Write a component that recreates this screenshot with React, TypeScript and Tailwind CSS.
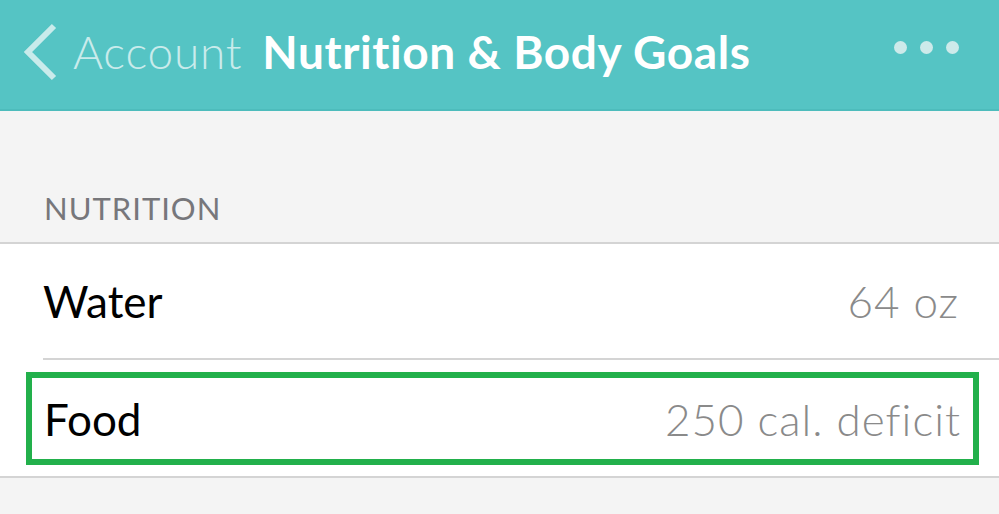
export default function App() {
  return (
    <div className="w-[999px] h-[514px] overflow-hidden bg-[#f4f4f4] [font-variant-ligatures:none]" style={{ fontFamily: 'Lato, "Open Sans", sans-serif' }}>
      {/* top bar */}
      <div className="h-[111px] bg-[#55c4c4] border-b-2 border-[#4dbcbc] flex items-center pl-[22px] pr-[40px] pb-[6px]">
        <svg width="36" height="58" viewBox="0 0 36 58" className="shrink-0">
          <path d="M32 3 L6 29 L32 55" fill="none" stroke="#c9ebeb" strokeWidth="6" />
        </svg>
        <span className="ml-[15px] text-[46px] leading-none font-light text-[#c9ebeb] tracking-[0.8px]">Account</span>
        <span className="ml-[20px] text-[46px] leading-none font-bold text-white tracking-[0.6px]">Nutrition &amp; Body Goals</span>
        <div className="ml-auto flex gap-[13px] pb-[8px]">
          <span className="w-[13px] h-[13px] rounded-full bg-[#cdeaea]" />
          <span className="w-[13px] h-[13px] rounded-full bg-[#cdeaea]" />
          <span className="w-[13px] h-[13px] rounded-full bg-[#cdeaea]" />
        </div>
      </div>

      {/* section header */}
      <div className="h-[131px] flex items-end pl-[44px] pb-[18px]">
        <span className="text-[31px] leading-none text-[#77777b] tracking-[1px]">NUTRITION</span>
      </div>

      {/* rows */}
      <div className="bg-white border-t-2 border-b-2 border-[#d4d4d4]">
        <div className="ml-[43px] h-[116px] border-b-2 border-[#d4d4d4] flex items-center justify-between pr-[40px]">
          <span className="text-[44px] text-black">Water</span>
          <span className="text-[44px] font-light text-[#8a8a8a] tracking-[1px]">64 oz</span>
        </div>
        <div className="h-[116px] flex items-center">
          <div className="ml-[26px] mr-[20px] mt-[12px] mb-[11px] flex-1 h-[93px] border-[6px] border-[#22b04b] flex items-center justify-between pl-[12px] pr-[12px]">
            <span className="text-[44px] text-black">Food</span>
            <span className="text-[44px] font-light text-[#8a8a8a] tracking-[1px]">250 cal. deficit</span>
          </div>
        </div>
      </div>
    </div>
  );
}
